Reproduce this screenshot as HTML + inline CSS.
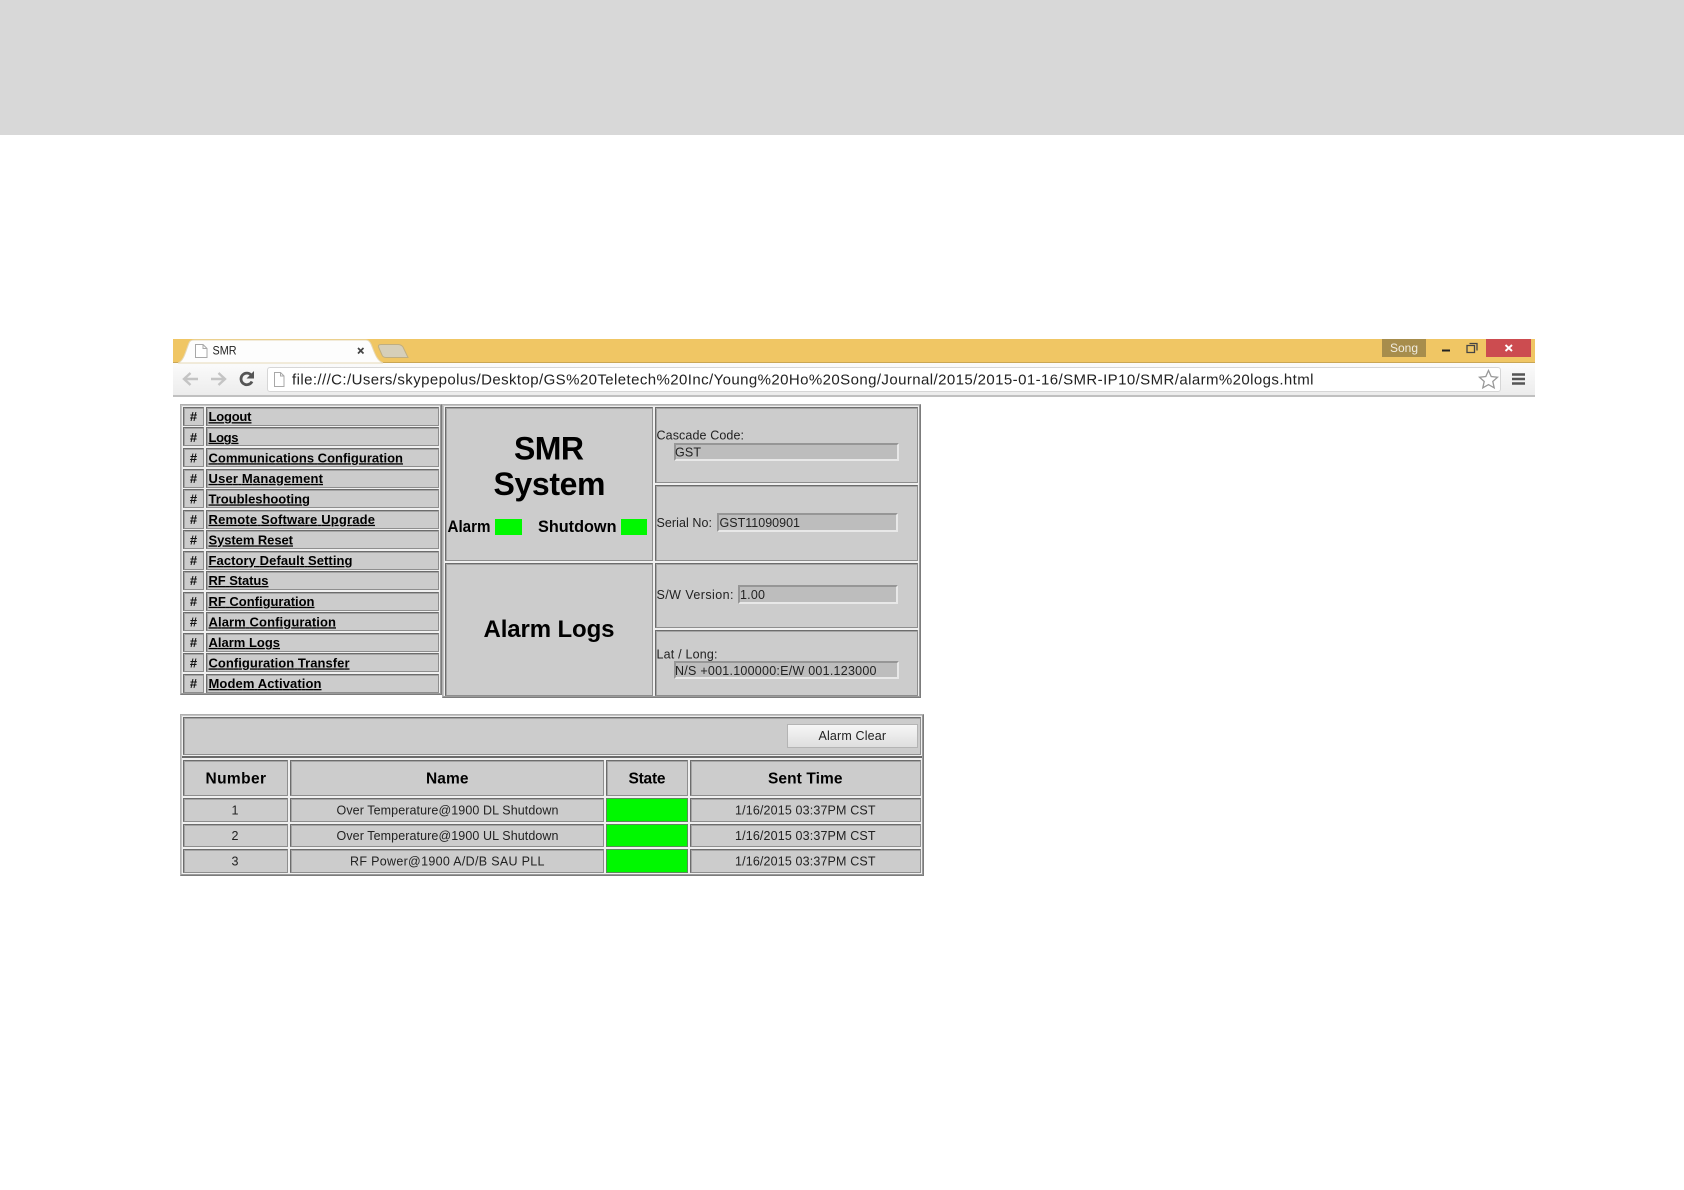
<!DOCTYPE html>
<html><head><meta charset="utf-8"><title>SMR</title>
<style>
html,body{margin:0;padding:0;background:#fff;width:1684px;height:1190px;overflow:hidden;font-family:"Liberation Sans",Arial,sans-serif}
#band{position:absolute;left:0;top:0;width:1684px;height:135px;background:#d8d8d8}
#w{position:absolute;left:0;top:0;width:1684px;height:1190px;filter:blur(.3px)}
#w div{position:absolute;box-sizing:border-box}
.o{background:#f0f0f0;border:1px solid;border-color:#b0b0b0 #7c7c7c #7c7c7c #b0b0b0;box-shadow:inset -1px -1px #9a9a9a,inset 1px 1px #c4c4c4}
.c{background:#cccccc;border:1px solid;border-color:#6c6c6c #8e8e8e #8e8e8e #6c6c6c;box-shadow:inset 1px 1px #a4a4a4}
.i{background:#bdbdbd;border:2px solid;border-color:#969696 #e8e8e8 #e8e8e8 #969696}
.g{background:#00f800}
svg{position:absolute;left:0;top:0}
text{font-family:"Liberation Sans",Arial,sans-serif}
.m{font-size:13px;font-weight:bold;fill:#000;text-decoration:underline}
.h{font-size:13px;font-weight:bold;fill:#111;text-anchor:middle}
.l{font-size:12.5px;fill:#222}
.t{font-size:12.5px;fill:#222}
.b{font-weight:bold;fill:#000}
</style></head><body><div id="band"></div><div id="w">

<!-- browser chrome -->
<div style="left:173px;top:339px;width:1362px;height:24px;background:#f0c664;border-bottom:1px solid #c9a655"></div>
<div style="left:173px;top:363px;width:1362px;height:34px;background:linear-gradient(#fbfbfb,#ececec);border-bottom:2px solid #c0c0c0"></div>
<div style="left:267px;top:367px;width:1234px;height:25px;background:#fff;border:1px solid #d6d6d6;border-radius:3px"></div>
<div style="left:1382px;top:339px;width:44px;height:18px;background:#a78d4c"></div>
<div style="left:1486px;top:339px;width:45px;height:18px;background:#cc4c50"></div>

<!-- menu -->
<div class="o" style="left:180px;top:404px;width:262px;height:291px"></div>
<div class="c" style="left:183px;top:407px;width:21px;height:19px"></div><div class="c" style="left:206px;top:407px;width:233px;height:19px"></div>
<div class="c" style="left:183px;top:427px;width:21px;height:19px"></div><div class="c" style="left:206px;top:427px;width:233px;height:19px"></div>
<div class="c" style="left:183px;top:448px;width:21px;height:19px"></div><div class="c" style="left:206px;top:448px;width:233px;height:19px"></div>
<div class="c" style="left:183px;top:469px;width:21px;height:19px"></div><div class="c" style="left:206px;top:469px;width:233px;height:19px"></div>
<div class="c" style="left:183px;top:489px;width:21px;height:19px"></div><div class="c" style="left:206px;top:489px;width:233px;height:19px"></div>
<div class="c" style="left:183px;top:510px;width:21px;height:19px"></div><div class="c" style="left:206px;top:510px;width:233px;height:19px"></div>
<div class="c" style="left:183px;top:530px;width:21px;height:19px"></div><div class="c" style="left:206px;top:530px;width:233px;height:19px"></div>
<div class="c" style="left:183px;top:551px;width:21px;height:19px"></div><div class="c" style="left:206px;top:551px;width:233px;height:19px"></div>
<div class="c" style="left:183px;top:571px;width:21px;height:19px"></div><div class="c" style="left:206px;top:571px;width:233px;height:19px"></div>
<div class="c" style="left:183px;top:592px;width:21px;height:19px"></div><div class="c" style="left:206px;top:592px;width:233px;height:19px"></div>
<div class="c" style="left:183px;top:612px;width:21px;height:19px"></div><div class="c" style="left:206px;top:612px;width:233px;height:19px"></div>
<div class="c" style="left:183px;top:633px;width:21px;height:19px"></div><div class="c" style="left:206px;top:633px;width:233px;height:19px"></div>
<div class="c" style="left:183px;top:653px;width:21px;height:19px"></div><div class="c" style="left:206px;top:653px;width:233px;height:19px"></div>
<div class="c" style="left:183px;top:674px;width:21px;height:19px"></div><div class="c" style="left:206px;top:674px;width:233px;height:19px"></div>

<!-- header panel -->
<div class="o" style="left:442px;top:404px;width:479px;height:294px"></div>
<div class="c" style="left:445px;top:407px;width:208px;height:154px"></div>
<div class="c" style="left:445px;top:563px;width:208px;height:133px"></div>
<div class="c" style="left:655px;top:407px;width:263px;height:76px"></div>
<div class="c" style="left:655px;top:485px;width:263px;height:76px"></div>
<div class="c" style="left:655px;top:563px;width:263px;height:65px"></div>
<div class="c" style="left:655px;top:630px;width:263px;height:66px"></div>
<div class="g" style="left:495px;top:519px;width:27px;height:16px"></div>
<div class="g" style="left:621px;top:519px;width:26px;height:16px"></div>
<div class="i" style="left:674px;top:443px;width:225px;height:18px"></div>
<div class="i" style="left:717px;top:513px;width:181px;height:19px"></div>
<div class="i" style="left:738px;top:585px;width:160px;height:19px"></div>
<div class="i" style="left:674px;top:661px;width:225px;height:18px"></div>

<!-- alarm table -->
<div class="o" style="left:180px;top:714px;width:743.5px;height:162px"></div>
<div style="left:182px;top:756px;width:740px;height:2px;background:#6a6a6a"></div>
<div class="c" style="left:183px;top:717px;width:738px;height:38px"></div>
<div style="left:787px;top:724px;width:131px;height:24px;background:linear-gradient(#f6f6f6,#dedede);border:1px solid #b4b4b4"></div>
<div class="c" style="left:183px;top:760px;width:105px;height:36px"></div><div class="c" style="left:290px;top:760px;width:314px;height:36px"></div><div class="c" style="left:606px;top:760px;width:82px;height:36px"></div><div class="c" style="left:690px;top:760px;width:231px;height:36px"></div>
<div class="c" style="left:183px;top:798px;width:105px;height:24px"></div><div class="c" style="left:290px;top:798px;width:314px;height:24px"></div><div style="left:606px;top:798px;width:82px;height:24px;background:#00f800;border:1px solid #5a8a5a"></div><div class="c" style="left:690px;top:798px;width:231px;height:24px"></div>
<div class="c" style="left:183px;top:824px;width:105px;height:23px"></div><div class="c" style="left:290px;top:824px;width:314px;height:23px"></div><div style="left:606px;top:824px;width:82px;height:23px;background:#00f800;border:1px solid #5a8a5a"></div><div class="c" style="left:690px;top:824px;width:231px;height:23px"></div>
<div class="c" style="left:183px;top:849px;width:105px;height:24px"></div><div class="c" style="left:290px;top:849px;width:314px;height:24px"></div><div style="left:606px;top:849px;width:82px;height:24px;background:#00f800;border:1px solid #5a8a5a"></div><div class="c" style="left:690px;top:849px;width:231px;height:24px"></div>

<svg width="1684" height="1190" viewBox="0 0 1684 1190">
<!-- tab -->
<path d="M178 363 C184 361 186 350 189 343 Q190 340 194 340 L366 340 Q369 340 371 344 C374 351 376 360 383 363Z" fill="#fdfdfd" stroke="#e6d9b8"/>
<path d="M381 344.500L398 344.500Q401 344.500 403 347L408 357.500L386 357.500Q383 357.500 382 355L378.500 347Q378 344.500 381 344.500Z" fill="#d6cfb9" stroke="#bfae80"/>
<path d="M195.500 344.500H203L207 348.500V357.500H195.500ZM203 344.500V348.500H207" fill="#fff" stroke="#a8a8a8"/>
<text x="212.500" y="354.500" font-size="12" fill="#222" textLength="24" lengthAdjust="spacingAndGlyphs">SMR</text>
<path d="M358 348L363.500 353.500M363.500 348L358 353.500" stroke="#444" stroke-width="1.700"/>
<!-- toolbar icons -->
<path d="M198 379H185M190.500 373L184 379L190.500 385" fill="none" stroke="#c4c4c4" stroke-width="2.400"/>
<path d="M211 379H224M218.500 373L225 379L218.500 385" fill="none" stroke="#c4c4c4" stroke-width="2.400"/>
<path d="M252 381.500A5.800 5.800 0 1 1 251.500 375.500" fill="none" stroke="#555" stroke-width="2.800"/>
<path d="M254 371V378.500H246.500Z" fill="#555"/>
<path d="M274.500 372.500H280.500L284 376V386.500H274.500ZM280.500 372.500V376H284" fill="#fff" stroke="#a8a8a8"/>
<text x="292" y="384.500" font-size="15" fill="#222" textLength="1021.500" lengthAdjust="spacing">file:///C:/Users/skypepolus/Desktop/GS%20Teletech%20Inc/Young%20Ho%20Song/Journal/2015/2015-01-16/SMR-IP10/SMR/alarm%20logs.html</text>
<path d="M1488.500 370.500L1491.200 376.500L1497.500 377.200L1492.800 381.500L1494.200 387.800L1488.500 384.600L1482.800 387.800L1484.200 381.500L1479.500 377.200L1485.800 376.500Z" fill="#fff" stroke="#999" stroke-width="1.300"/>
<path d="M1512 374.500H1525M1512 379H1525M1512 383.500H1525" stroke="#555" stroke-width="2.400"/>
<text x="1390" y="352" font-size="12" fill="#f1ecdf" textLength="28" lengthAdjust="spacingAndGlyphs">Song</text>
<path d="M1442 350.500H1450" stroke="#222" stroke-width="2"/>
<path d="M1469.500 343.500H1477V350.500M1467 345.500H1474.500V352.500H1467Z" fill="none" stroke="#444" stroke-width="1.300"/>
<path d="M1505.500 345L1512 351M1512 345L1505.500 351" stroke="#fff" stroke-width="1.900"/>

<!-- menu text -->
<text class="h" x="193.500" y="421.200">#</text>
<text class="h" x="193.500" y="441.800">#</text>
<text class="h" x="193.500" y="462.300">#</text>
<text class="h" x="193.500" y="482.900">#</text>
<text class="h" x="193.500" y="503.400">#</text>
<text class="h" x="193.500" y="523.800">#</text>
<text class="h" x="193.500" y="544.400">#</text>
<text class="h" x="193.500" y="565">#</text>
<text class="h" x="193.500" y="585">#</text>
<text class="h" x="193.500" y="605.800">#</text>
<text class="h" x="193.500" y="626.300">#</text>
<text class="h" x="193.500" y="646.900">#</text>
<text class="h" x="193.500" y="667.400">#</text>
<text class="h" x="193.500" y="688">#</text>
<text class="m" x="208.500" y="421.200" textLength="43">Logout</text>
<text class="m" x="208.500" y="441.800" textLength="30">Logs</text>
<text class="m" x="208.500" y="462.300" textLength="194.500">Communications Configuration</text>
<text class="m" x="208.500" y="482.900" textLength="114.500">User Management</text>
<text class="m" x="208.500" y="503.400" textLength="101.500">Troubleshooting</text>
<text class="m" x="208.500" y="523.800" textLength="166.500">Remote Software Upgrade</text>
<text class="m" x="208.500" y="544.400" textLength="84.500">System Reset</text>
<text class="m" x="208.500" y="565" textLength="144">Factory Default Setting</text>
<text class="m" x="208.500" y="585" textLength="60">RF Status</text>
<text class="m" x="208.500" y="605.800" textLength="106">RF Configuration</text>
<text class="m" x="208.500" y="626.300" textLength="127.500">Alarm Configuration</text>
<text class="m" x="208.500" y="646.900" textLength="71.500">Alarm Logs</text>
<text class="m" x="208.500" y="667.400" textLength="141">Configuration Transfer</text>
<text class="m" x="208.500" y="688" textLength="113">Modem Activation</text>

<!-- panel text -->
<text class="b" x="514" y="459.500" font-size="32" textLength="70">SMR</text>
<text class="b" x="493.500" y="495" font-size="32" textLength="112">System</text>
<text class="b" x="447.500" y="532" font-size="16.500" textLength="43" lengthAdjust="spacingAndGlyphs">Alarm</text>
<text class="b" x="538" y="532" font-size="16.500" textLength="78.500" lengthAdjust="spacingAndGlyphs">Shutdown</text>
<text class="b" x="483.500" y="637" font-size="24" textLength="131">Alarm Logs</text>
<text class="l" x="656.500" y="439.300" textLength="87.500">Cascade Code:</text>
<text class="t" x="675" y="456.500" textLength="26">GST</text>
<text class="l" x="656.500" y="527" textLength="55.500">Serial No:</text>
<text class="t" x="719.500" y="527" textLength="80.500">GST11090901</text>
<text class="l" x="656.500" y="599" textLength="77">S/W Version:</text>
<text class="t" x="740" y="599" textLength="25">1.00</text>
<text class="l" x="656.500" y="658.500" textLength="61">Lat / Long:</text>
<text class="t" x="675" y="675" textLength="201.500">N/S +001.100000:E/W 001.123000</text>

<!-- table text -->
<text x="818.500" y="740" font-size="12.500" fill="#222" textLength="67.500">Alarm Clear</text>
<text class="b" x="205.500" y="783.700" font-size="15.500" textLength="60.500">Number</text>
<text class="b" x="426" y="783.700" font-size="15.500" textLength="42.500">Name</text>
<text class="b" x="628.500" y="783.700" font-size="15.500" textLength="37">State</text>
<text class="b" x="768" y="783.700" font-size="15.500" textLength="74.500">Sent Time</text>
<text class="t" x="235" y="814.500" text-anchor="middle">1</text>
<text class="t" x="235" y="840" text-anchor="middle">2</text>
<text class="t" x="235" y="865.300" text-anchor="middle">3</text>
<text class="t" x="336.500" y="814.500" textLength="222">Over Temperature@1900 DL Shutdown</text>
<text class="t" x="336.500" y="840" textLength="222">Over Temperature@1900 UL Shutdown</text>
<text class="t" x="350" y="865.300" textLength="194.500">RF Power@1900 A/D/B SAU PLL</text>
<text class="t" x="735" y="814.500" textLength="140.500">1/16/2015 03:37PM CST</text>
<text class="t" x="735" y="840" textLength="140.500">1/16/2015 03:37PM CST</text>
<text class="t" x="735" y="865.300" textLength="140.500">1/16/2015 03:37PM CST</text>
</svg>
</div></body></html>
